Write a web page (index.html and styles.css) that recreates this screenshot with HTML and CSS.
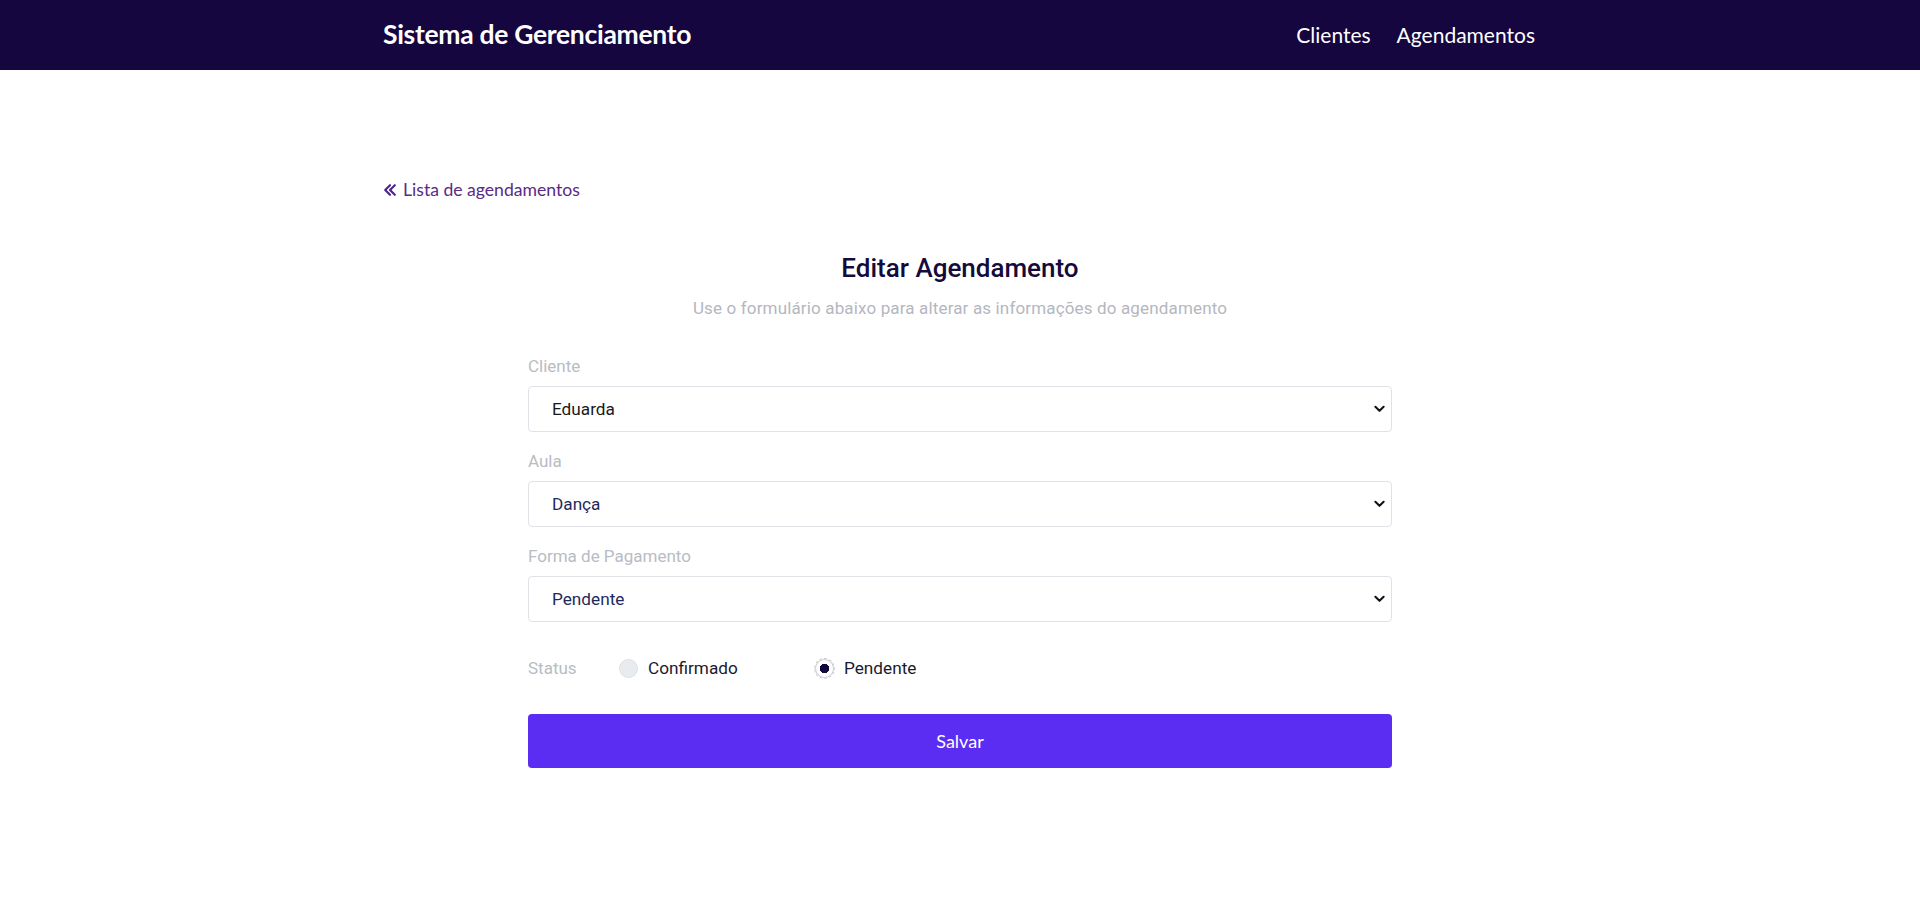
FILE: index.html
```html
<!DOCTYPE html>
<html lang="pt-BR">
<head>
<meta charset="utf-8">
<title>Editar Agendamento</title>
<link rel="stylesheet" href="styles.css">
</head>
<body>
<nav class="navbar">
  <div class="nav-inner">
    <a class="brand" href="#">Sistema de Gerenciamento</a>
    <div class="nav-links">
      <a href="#">Clientes</a>
      <a href="#">Agendamentos</a>
    </div>
  </div>
</nav>
<main class="container">
  <a class="back" href="#">
    <svg class="back-icon" viewBox="0 0 16 16" width="14" height="14" aria-hidden="true">
      <path d="M8 2.5 L2.5 8 L8 13.5 M13.5 2.5 L8 8 L13.5 13.5" fill="none" stroke="currentColor" stroke-width="2.4" stroke-linecap="round" stroke-linejoin="round"/>
    </svg>
    Lista de agendamentos
  </a>
  <section class="form-wrap">
    <h1 class="title">Editar Agendamento</h1>
    <p class="subtitle">Use o formulário abaixo para alterar as informações do agendamento</p>
    <form class="form">
      <div class="group">
        <label class="label">Cliente</label>
        <div class="select-box">
          <select class="select dark"><option>Eduarda</option></select>
          <svg class="chev" viewBox="0 0 12 8" width="11" height="8" aria-hidden="true"><path d="M1.5 1.5 L6 6 L10.5 1.5" fill="none" stroke="#111" stroke-width="2.2" stroke-linecap="round" stroke-linejoin="round"/></svg>
        </div>
      </div>
      <div class="group">
        <label class="label">Aula</label>
        <div class="select-box">
          <select class="select"><option>Dança</option></select>
          <svg class="chev" viewBox="0 0 12 8" width="11" height="8" aria-hidden="true"><path d="M1.5 1.5 L6 6 L10.5 1.5" fill="none" stroke="#111" stroke-width="2.2" stroke-linecap="round" stroke-linejoin="round"/></svg>
        </div>
      </div>
      <div class="group">
        <label class="label">Forma de Pagamento</label>
        <div class="select-box">
          <select class="select"><option>Pendente</option></select>
          <svg class="chev" viewBox="0 0 12 8" width="11" height="8" aria-hidden="true"><path d="M1.5 1.5 L6 6 L10.5 1.5" fill="none" stroke="#111" stroke-width="2.2" stroke-linecap="round" stroke-linejoin="round"/></svg>
        </div>
      </div>
      <div class="status">
        <span class="label status-label">Status</span>
        <label class="radio-opt opt1"><input type="radio" name="status" class="radio"> Confirmado</label>
        <label class="radio-opt"><input type="radio" name="status" class="radio checked" checked> Pendente</label>
      </div>
      <button type="button" class="btn">Salvar</button>
    </form>
  </section>
</main>
</body>
</html>
```
FILE: styles.css
```css
* { box-sizing: border-box; }
html, body { margin: 0; padding: 0; background: #fff; }
body { font-family: Roboto, "Noto Sans", sans-serif; color: #212529; }

.navbar { height: 70px; background: #150640; }
.nav-inner {
  width: 1150px; margin: 0 auto; height: 70px;
  display: flex; align-items: center; justify-content: space-between;
}
.brand {
  font-family: Lato, "Noto Sans", sans-serif; font-weight: 700;
  font-size: 26.5px; color: #fff; text-decoration: none; letter-spacing: -0.3px;
  margin-top: -2px; margin-left: -2px;
}
.nav-links { display: flex; gap: 26px; margin-right: 0; margin-top: -2px; }
.nav-links a {
  font-family: Lato, "Noto Sans", sans-serif; font-size: 21px; color: #fff;
  text-decoration: none;
}

.container { width: 1150px; margin: 0 auto; padding-top: 109px; }
.back {
  display: inline-flex; align-items: center; gap: 6px; margin-left: -2px;
  font-family: Lato, "Noto Sans", sans-serif; font-size: 17.6px; line-height: 22px;
  color: #5a2a86; text-decoration: none;
}
.back-icon { color: #4a2390; }

.form-wrap { width: 864px; margin: 51px auto 0; }
.title {
  margin: 0; text-align: center; font-weight: 500; font-size: 26px; line-height: 32px;
  color: #140a3c;
}
.subtitle {
  margin: 14px 0 0; text-align: center; font-size: 17px; line-height: 20px;
  letter-spacing: 0.15px; color: #b4b7bf;
}
.form { margin-top: 38px; }
.group { margin-bottom: 19px; }
.group .label { display: block; margin-bottom: 10px; }
.label { font-size: 17px; line-height: 20px; color: #b8bcc4; }
.select-box { position: relative; height: 46px; }
.select {
  -webkit-appearance: none; appearance: none; width: 100%; height: 46px;
  border: 1px solid #dfe2e6; border-radius: 4px; background: #fff;
  padding: 0 40px 0 23px; font-family: Roboto, "Noto Sans", sans-serif;
  font-size: 17.2px; color: #1f2a5c; outline: none;
}
.select.dark { color: #1a1a1a; }
.chev { position: absolute; right: 7px; top: 19px; pointer-events: none; }

.status { display: flex; align-items: center; height: 20px; margin-top: 36px; }
.status-label { width: 91px; }
.radio-opt {
  display: inline-flex; align-items: center; gap: 10px;
  font-size: 17.2px; line-height: 20px; color: #1a1a2e;
}
.opt1 { width: 196px; }
.radio {
  -webkit-appearance: none; appearance: none; margin: 0;
  width: 19px; height: 19px; border-radius: 50%;
  background: #e9ecef; border: 1px solid #dde1e5;
}
.radio:checked {
  background: #fff radial-gradient(circle, #150a40 0 4.5px, transparent 5px);
  border: 1px solid #c9ccd3; outline: 1px dashed #c9ccd3; outline-offset: 0;
}

.btn {
  display: block; width: 100%; height: 54px; margin-top: 36px;
  border: none; border-radius: 4px; background: #5b2df2; color: #fff;
  font-family: Lato, "Noto Sans", sans-serif; font-size: 18px;
}
```
